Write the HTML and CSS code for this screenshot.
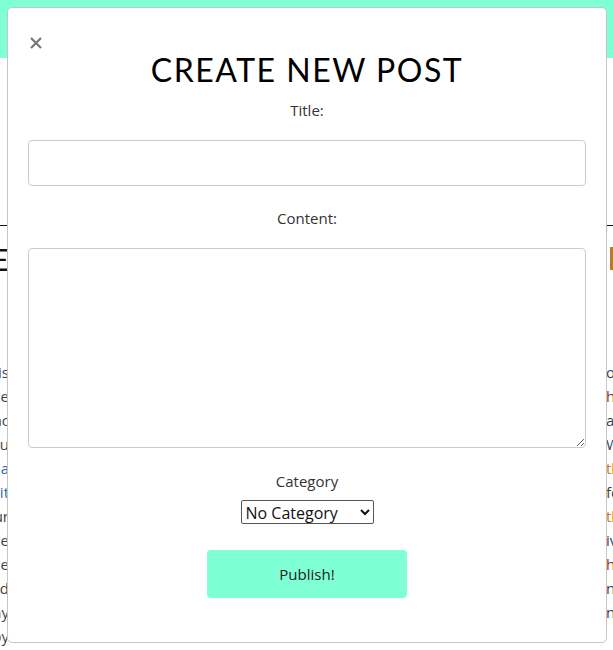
FILE: index.html
```html
<!DOCTYPE html>
<html lang="en">
<head>
<meta charset="utf-8">
<title>Create new post</title>
<link rel="stylesheet" href="styles.css">
</head>
<body>
<div class="page">
  <header class="site-header"></header>
  <div class="hero-space"></div>
  <div class="rule"></div>
  <div class="heading-row">
    <div class="frag-left"><span class="big">THE</span></div>
    <div></div>
    <div class="frag-right"><span class="bar"></span></div>
  </div>
  <div class="article">
    <div class="line"><div class="frag-left"><span>is</span></div><div></div><div class="frag-right"><span>our</span></div></div>
    <div class="line"><div class="frag-left"><span>the</span></div><div></div><div class="frag-right"><span class="brown">hm</span></div></div>
    <div class="line"><div class="frag-left"><span>pac</span></div><div></div><div class="frag-right"><span>an</span></div></div>
    <div class="line"><div class="frag-left"><span>you</span></div><div></div><div class="frag-right"><span>We</span></div></div>
    <div class="line"><div class="frag-left"><span class="link">bla</span></div><div></div><div class="frag-right"><span class="orange">the</span></div></div>
    <div class="line"><div class="frag-left"><span class="link">it</span></div><div></div><div class="frag-right"><span>few</span></div></div>
    <div class="line"><div class="frag-left"><span>our</span></div><div></div><div class="frag-right"><span class="orange">the</span></div></div>
    <div class="line"><div class="frag-left"><span>the</span></div><div></div><div class="frag-right"><span>ive</span></div></div>
    <div class="line"><div class="frag-left"><span>ade</span></div><div></div><div class="frag-right"><span class="brown">his</span></div></div>
    <div class="line"><div class="frag-left"><span>and</span></div><div></div><div class="frag-right"><span>new</span></div></div>
    <div class="line"><div class="frag-left"><span>my</span></div><div></div><div class="frag-right"><span>nd</span></div></div>
    <div class="line"><div class="frag-left"><span>by</span></div><div></div><div class="frag-right"><span></span></div></div>
  </div>
</div>

<div class="modal">
  <button class="close" type="button" aria-label="Close">
    <svg width="12" height="12" viewBox="0 0 12 12"><path d="M1 1 L11 11 M11 1 L1 11" stroke="#777" stroke-width="2.2" stroke-linecap="butt" fill="none"/></svg>
  </button>
  <h1 class="modal-title">CREATE NEW POST</h1>
  <form class="post-form">
    <label class="field-label" for="title">Title:</label>
    <input class="text-input" id="title" type="text">
    <label class="field-label label-content" for="content">Content:</label>
    <textarea class="text-area" id="content"></textarea>
    <label class="field-label label-category" for="category">Category</label>
    <select class="category-select" id="category">
      <option>No Category</option>
    </select>
    <button class="publish" type="button">Publish!</button>
  </form>
</div>
</body>
</html>
```

FILE: styles.css
```css
* { box-sizing: border-box; }

html, body {
  margin: 0;
  padding: 0;
  height: 100%;
  overflow: hidden;
  background: #fff;
}

body {
  font-family: "Open Sans", "Noto Sans", sans-serif;
  color: #333;
}

/* ---------- background page ---------- */
.site-header {
  height: 58px;
  background: #7fffd4;
}

.hero-space { height: 167px; }

.rule {
  height: 1px;
  background: #111;
}

.heading-row,
.line {
  display: grid;
  grid-template-columns: 9px 1fr 7px;
  white-space: nowrap;
}

.heading-row {
  margin-top: 18px;
  height: 30px;
  font-family: "Lato", sans-serif;
  font-size: 30px;
  line-height: 30px;
  color: #111;
}

.big { font-weight: 400; }

.bar {
  display: block;
  width: 3px;
  height: 23px;
  margin: 3px 0 0 4px;
  background: #b77a2c;
}

.frag-left {
  display: flex;
  justify-content: flex-end;
  overflow: hidden;
}

.frag-right {
  display: flex;
  justify-content: flex-start;
  overflow: hidden;
}

.article {
  margin-top: 86px;
  font-size: 15px;
  line-height: 24px;
  color: #444;
}

.link { color: #2a6cb0; }
.orange { color: #c5781e; }
.brown { color: #8a3d1c; }

/* ---------- modal ---------- */
.modal {
  position: fixed;
  top: 7px;
  left: 7px;
  width: 600px;
  bottom: 7px;
  background: #fff;
  border: 1px solid #c6c6c6;
  border-radius: 5px;
  padding: 20px;
}

.close {
  position: absolute;
  left: 22px;
  top: 29px;
  width: 12px;
  height: 12px;
  padding: 0;
  border: 0;
  background: none;
  display: block;
  cursor: pointer;
}

.close svg { display: block; }

.modal-title {
  margin: 22px 0 0;
  font-family: "Lato", sans-serif;
  font-weight: 400;
  font-size: 32px;
  line-height: 40px;
  letter-spacing: 1.5px;
  text-align: center;
  color: #000;
}

.post-form {
  display: flex;
  flex-direction: column;
}

.field-label {
  display: block;
  margin-top: 8px;
  font-size: 15px;
  line-height: 24px;
  text-align: center;
  color: #333;
}

.label-content { margin-top: 20px; }
.label-category { margin-top: 21px; }

.text-input {
  margin-top: 18px;
  height: 46px;
  border: 1px solid #ccc;
  border-radius: 4px;
  font: inherit;
  padding: 6px 10px;
}

.text-area {
  margin-top: 18px;
  height: 200px;
  border: 1px solid #ccc;
  border-radius: 4px;
  font: inherit;
  padding: 6px 10px;
  resize: vertical;
}

.category-select {
  align-self: center;
  margin-top: 7px;
  width: 133px;
  height: 24px;
  font-family: "Open Sans", "Noto Sans", sans-serif;
  font-size: 16px;
  color: #111;
  border: 1px solid #555;
  border-radius: 2px;
  background: #fff;
}

.publish {
  align-self: center;
  margin-top: 26px;
  width: 200px;
  height: 48px;
  border: 0;
  border-radius: 4px;
  background: #7fffd4;
  font-family: "Open Sans", "Noto Sans", sans-serif;
  font-size: 15px;
  color: #222;
  cursor: pointer;
}
```
